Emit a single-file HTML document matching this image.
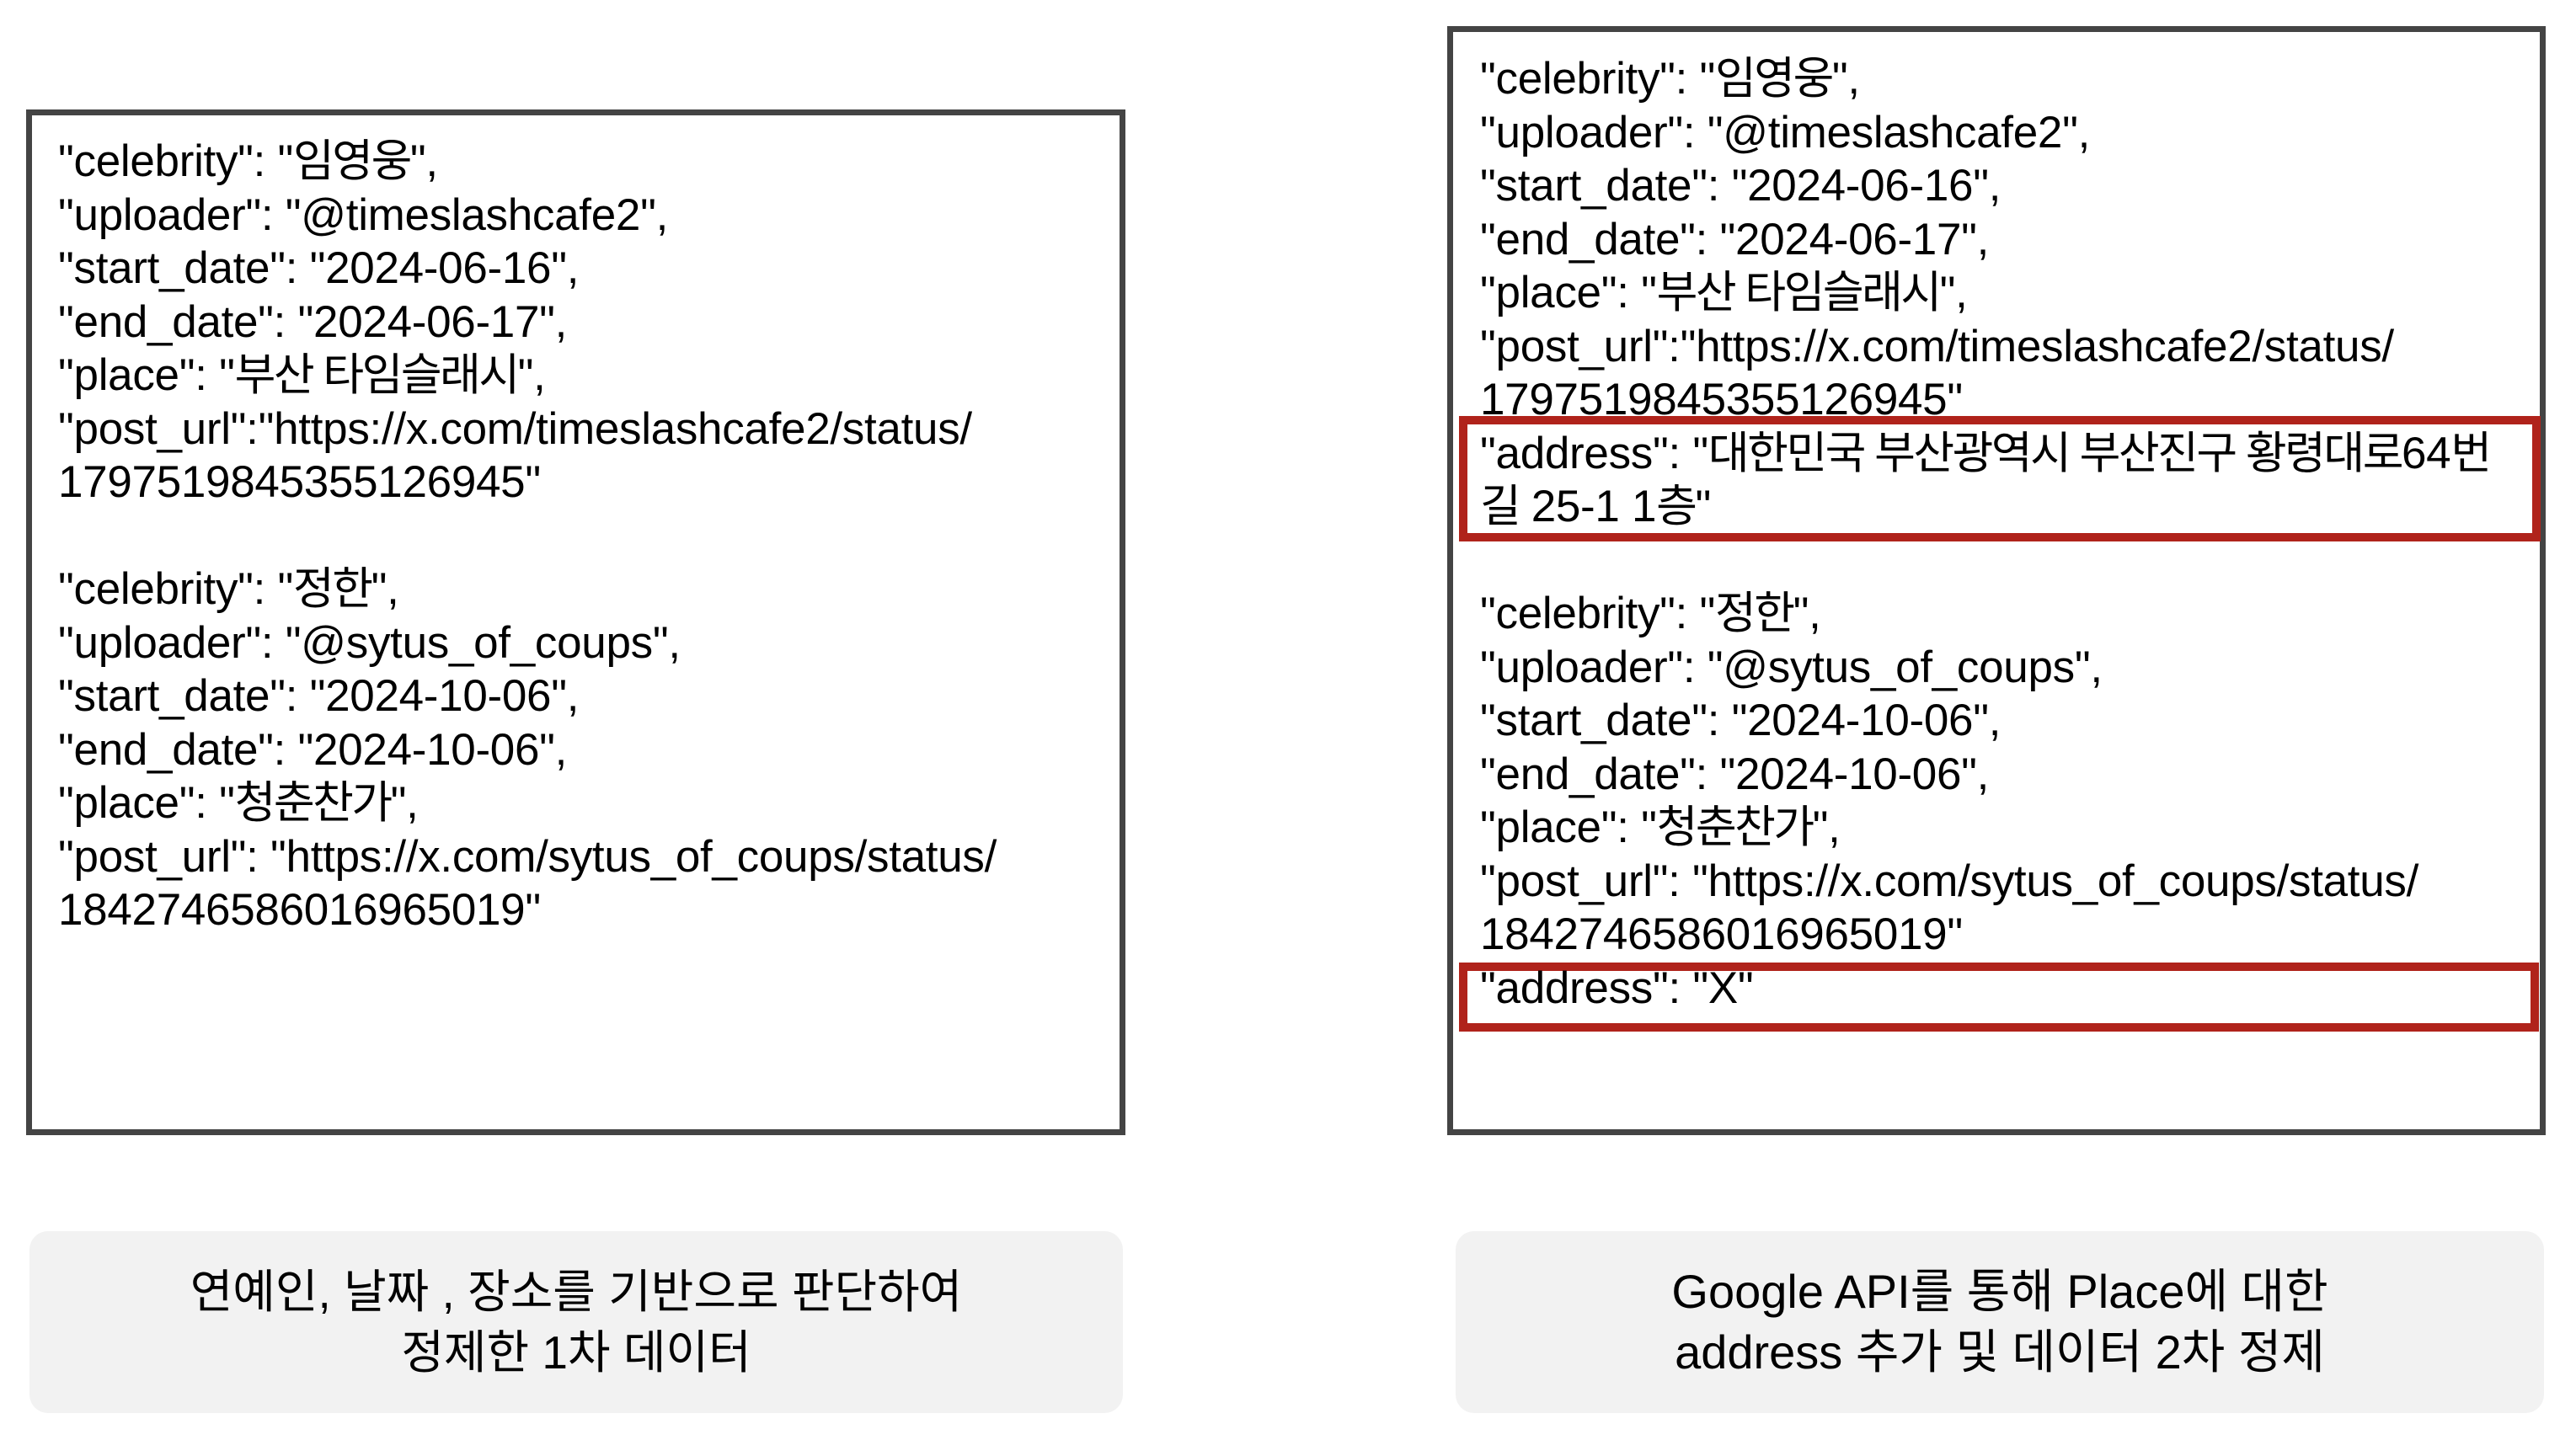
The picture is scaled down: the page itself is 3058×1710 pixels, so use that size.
<!DOCTYPE html>
<html><head><meta charset="utf-8">
<style>
html,body{margin:0;padding:0;background:#fff;}
body{width:3058px;height:1710px;position:relative;overflow:hidden;font-family:"Liberation Sans","Noto Sans CJK KR",sans-serif;color:#000;}
.box{position:absolute;border:7px solid #444;box-sizing:border-box;background:#fff;}
.txt{position:absolute;font-size:53px;line-height:63.5px;white-space:pre;letter-spacing:-0.3px;}
.k{letter-spacing:-2.5px;}
.red{position:absolute;border:10px solid #b0231b;box-sizing:border-box;}
.lab{position:absolute;background:#f2f2f2;border-radius:22px;box-sizing:border-box;display:flex;align-items:center;justify-content:center;text-align:center;font-size:55px;line-height:72px;}
</style></head><body>
<div class="box" style="left:31px;top:130px;width:1305px;height:1218px;"></div>
<div class="box" style="left:1718px;top:31px;width:1304px;height:1317px;"></div>
<div class="red" style="left:1732px;top:494px;width:1284px;height:149px;"></div>
<div class="red" style="left:1732px;top:1143px;width:1282px;height:82px;"></div>

<div class="txt" style="left:69px;top:160px;">"celebrity": "<span class="k">임영웅</span>",
"uploader": "@timeslashcafe2",
"start_date": "2024-06-16",
"end_date": "2024-06-17",
"place": "<span class="k">부산 타임슬래시</span>",
"post_url":"https://x.com/timeslashcafe2/status/
1797519845355126945"

"celebrity": "<span class="k">정한</span>",
"uploader": "@sytus_of_coups",
"start_date": "2024-10-06",
"end_date": "2024-10-06",
"place": "<span class="k">청춘찬가</span>",
"post_url": "https://x.com/sytus_of_coups/status/
1842746586016965019"</div>

<div class="txt" style="left:1757px;top:62px;">"celebrity": "<span class="k">임영웅</span>",
"uploader": "@timeslashcafe2",
"start_date": "2024-06-16",
"end_date": "2024-06-17",
"place": "<span class="k">부산 타임슬래시</span>",
"post_url":"https://x.com/timeslashcafe2/status/
1797519845355126945"
"address": "<span class="k">대한민국 부산광역시 부산진구 황령대로</span>64<span class="k">번</span>
<span class="k">길</span> 25-1 1<span class="k">층</span>"

"celebrity": "<span class="k">정한</span>",
"uploader": "@sytus_of_coups",
"start_date": "2024-10-06",
"end_date": "2024-10-06",
"place": "<span class="k">청춘찬가</span>",
"post_url": "https://x.com/sytus_of_coups/status/
1842746586016965019"
"address": "X"</div>

<div class="lab" style="left:35px;top:1462px;width:1298px;height:216px;">연예인, 날짜 , 장소를 기반으로 판단하여<br>정제한 1차 데이터</div>
<div class="lab" style="left:1728px;top:1462px;width:1292px;height:216px;font-size:56px;">Google API를 통해 Place에 대한<br>address 추가 및 데이터 2차 정제</div>
</body></html>
